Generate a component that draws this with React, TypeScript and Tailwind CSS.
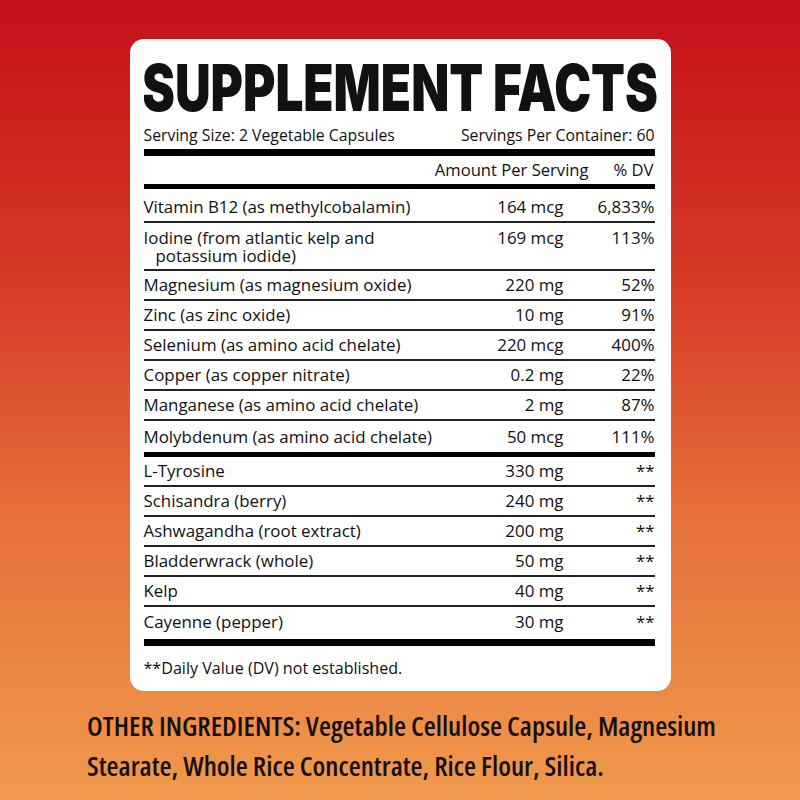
import React from "react";

const upper: { name: React.ReactNode; amt: string; dv: string; h: string; two?: boolean; last?: boolean }[] = [
  { name: "Vitamin B12 (as methylcobalamin)", amt: "164 mcg", dv: "6,833%", h: "h-[34px] pt-[4px]" },
  { name: "Iodine (from atlantic kelp and potassium iodide)", amt: "169 mcg", dv: "113%", h: "h-[48px]", two: true },
  { name: "Magnesium (as magnesium oxide)", amt: "220 mg", dv: "52%", h: "h-[30px]" },
  { name: "Zinc (as zinc oxide)", amt: "10 mg", dv: "91%", h: "h-[30px]" },
  { name: "Selenium (as amino acid chelate)", amt: "220 mcg", dv: "400%", h: "h-[30px]" },
  { name: "Copper (as copper nitrate)", amt: "0.2 mg", dv: "22%", h: "h-[30px]" },
  { name: "Manganese (as amino acid chelate)", amt: "2 mg", dv: "87%", h: "h-[30px]" },
  { name: "Molybdenum (as amino acid chelate)", amt: "50 mcg", dv: "111%", h: "h-[31px]", last: true },
];

const lower: { name: string; amt: string; h: string; last?: boolean }[] = [
  { name: "L-Tyrosine", amt: "330 mg", h: "h-[30px]" },
  { name: "Schisandra (berry)", amt: "240 mg", h: "h-[30px]" },
  { name: "Ashwagandha (root extract)", amt: "200 mg", h: "h-[30px]" },
  { name: "Bladderwrack (whole)", amt: "50 mg", h: "h-[30px]" },
  { name: "Kelp", amt: "40 mg", h: "h-[30px]" },
  { name: "Cayenne (pepper)", amt: "30 mg", h: "h-[32px] pb-[3px]", last: true },
];

export default function App() {
  return (
    <div className="w-[800px] h-[800px] overflow-hidden bg-[linear-gradient(180deg,#c5111a_0%,#d63a26_35%,#e6703a_65%,#f09a4c_100%)] pt-[39px]">
      <div
        className="mx-auto w-[541px] h-[652px] bg-white rounded-[14px] pl-[14px] pr-[16px] pt-[17px] text-[#111] font-medium"
        style={{ fontFamily: '"Open Sans", sans-serif' }}
      >
        <div className="h-[64px] overflow-hidden -mr-[16px]">
          <div
            className="text-[64px] leading-[64px] font-black whitespace-nowrap origin-left scale-x-[0.772] -ml-[2px]"
            style={{ fontFamily: 'Inter, sans-serif' }}
          >
            SUPPLEMENT FACTS
          </div>
        </div>
        <div className="h-[29px] flex items-center justify-between text-[15.8px] leading-[20px]">
          <span>Serving Size: 2 Vegetable Capsules</span>
          <span>Servings Per Container: 60</span>
        </div>
        <div className="h-[7px] bg-black" />
        <div className="h-[28px] flex items-center justify-end text-[16.6px] leading-[20px]">
          <span className="mr-[25px]">Amount Per Serving</span>
          <span className="mr-[1px]">% DV</span>
        </div>
        <div className="h-[5px] bg-black" />
        {upper.map((r, i) => (
          <div
            key={i}
            className={`${r.h} flex ${r.two ? "items-start pt-[6px]" : "items-center"} text-[16.9px] leading-[18px] ${r.last ? "" : "border-b-2 border-[#222]"}`}
          >
            <div className={`flex-1 ${r.two ? "pl-[12px] -indent-[12px] w-[260px] flex-none mr-auto" : ""}`}>{r.name}</div>
            <div className="w-[120px] text-right">{r.amt}</div>
            <div className="w-[91px] text-right">{r.dv}</div>
          </div>
        ))}
        <div className="h-[5px] bg-black" />
        {lower.map((r, i) => (
          <div
            key={i}
            className={`${r.h} flex items-center text-[16.9px] leading-[18px] ${r.last ? "" : "border-b-2 border-[#222]"}`}
          >
            <div className="flex-1">{r.name}</div>
            <div className="w-[120px] text-right">{r.amt}</div>
            <div className="w-[91px] text-right">**</div>
          </div>
        ))}
        <div className="h-[7px] bg-black" />
        <div className="pt-[12px] text-[16.1px] leading-[20px]">**Daily Value (DV) not established.</div>
      </div>
      <div
        className="pl-[87px] pt-[14px] text-[27.6px] leading-[40px] font-semibold text-[#161110] whitespace-nowrap font-stretch-[75%]"
        style={{ fontFamily: '"Open Sans", sans-serif' }}
      >
        OTHER INGREDIENTS: Vegetable Cellulose Capsule, Magnesium
        <br />
        Stearate, Whole Rice Concentrate, Rice Flour, Silica.
      </div>
    </div>
  );
}
